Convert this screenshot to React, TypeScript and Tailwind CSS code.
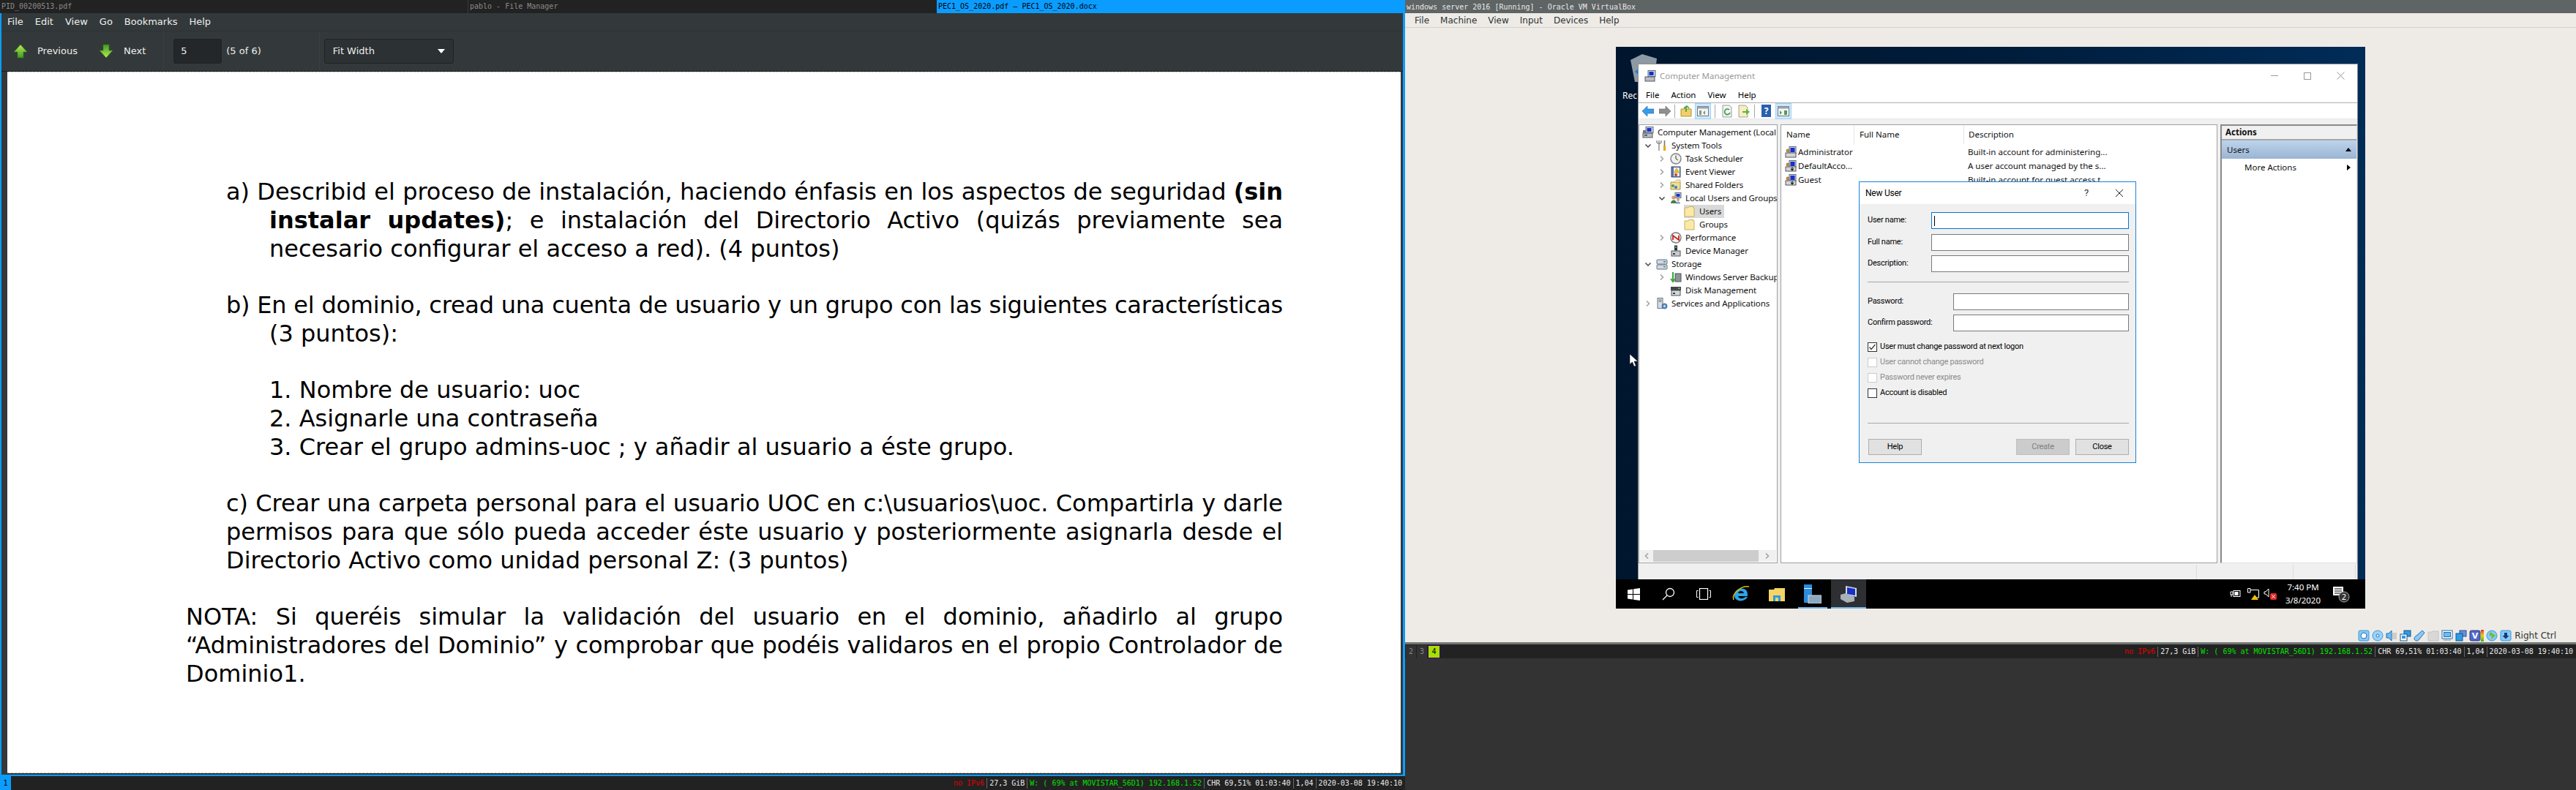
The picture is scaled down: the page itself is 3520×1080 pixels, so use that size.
import type { ReactNode } from "react";

const mono = "font-['DejaVu_Sans_Mono','Liberation_Mono',monospace]";
const segoe = "font-['Noto_Sans','Open_Sans',sans-serif]";

function GreenArrow({ down }: { down?: boolean }) {
    return (
        <svg width="20" height="20" viewBox="0 0 20 20" className={down ? "rotate-180" : ""}>
            <defs>
                <linearGradient id="ga" x1="0" y1="0" x2="0" y2="1">
                    <stop offset="0" stopColor="#b8ec5a" />
                    <stop offset="1" stopColor="#3f9a1c" />
                </linearGradient>
            </defs>
            <path d="M10 1 L19 11 H14 V19 H6 V11 H1 Z" fill="url(#ga)" stroke="#2f7a12" strokeWidth="0.6" />
        </svg>
    );
}

function StatusBar({ children, className }: { children?: ReactNode; className?: string }) {
    const parts = [
        { text: "27,3 GiB", color: "text-[#e8e8e8]" },
        { text: "W: ( 69% at MOVISTAR_56D1) 192.168.1.52", color: "text-[#00e000]" },
        { text: "CHR 69,51% 01:03:40", color: "text-[#e8e8e8]" },
        { text: "1,04", color: "text-[#e8e8e8]" },
        { text: "2020-03-08 19:40:10", color: "text-[#e8e8e8]" },
    ];
    return (
        <div className={`flex items-center bg-[#222222] text-[10px] ${mono} ${className ?? ""}`}>
            {children}
            <div className="ml-auto flex items-center pr-1">
                <span className="pr-[3px] text-[#e00000]">no IPv6</span>
                {parts.map((p) => (
                    <span key={p.text} className={`border-l border-[#666] px-[3px] leading-[14px] last:pr-0 ${p.color}`}>
                        {p.text}
                    </span>
                ))}
            </div>
        </div>
    );
}

function PdfViewer() {
    const line = "h-[38.75px] leading-[38.75px] whitespace-nowrap";
    const just = `${line} [text-align:justify] [text-align-last:justify]`;
    return (
        <div className="flex min-h-0 flex-1 flex-col border-r-[3px] border-b-2 border-l-2 border-[#0a9dff] bg-[#33393b] font-['DejaVu_Sans',sans-serif] text-[13px] text-[#eeeeec]">
            <div className="flex h-[25px] items-center gap-[16px] border-b border-[#2d3335] pl-2">
                {["File", "Edit", "View", "Go", "Bookmarks", "Help"].map((m) => (
                    <span key={m}>{m}</span>
                ))}
            </div>
            <div className="flex h-[54px] items-center pl-4">
                <GreenArrow />
                <span className="ml-[13px]">Previous</span>
                <span className="ml-[29px]">
                    <GreenArrow down />
                </span>
                <span className="ml-[14px]">Next</span>
                <span className="ml-[24px] h-full w-px bg-[#3a4042]" />
                <div className="ml-[13px] flex h-[34px] w-[66px] items-center rounded-[3px] border border-[#1f2324] bg-[#232729] pl-[9px]">5</div>
                <span className="ml-[6px]">(5 of 6)</span>
                <span className="ml-[79px] h-full w-px bg-[#3a4042]" />
                <div className="ml-[6px] flex h-[34px] w-[177px] items-center justify-between rounded-[3px] border border-[#1f2324] bg-[#2c3133] px-[11px]">
                    Fit Width
                    <span className="h-0 w-0 border-x-[5px] border-t-[6px] border-x-transparent border-t-white" />
                </div>
            </div>
            <div className="min-h-0 flex-1 border-t border-[#1b1e1f] pr-[3px] pb-[2px] pl-2">
                <div className="flex h-full flex-col border-y border-dashed border-[#cccccc] bg-white pt-[144px] pl-[244px] font-['DejaVu_Sans',sans-serif] text-[32px] text-black">
                    <div className="w-[1499px]">
                        <div className={`${just} pl-[55px] tracking-[-0.05px]`}>
                            a) Describid el proceso de instalación, haciendo énfasis en los aspectos de seguridad <b>(sin</b>
                        </div>
                        <div className={`${just} pl-[114px]`}>
                            <b>instalar updates)</b>; e instalación del Directorio Activo (quizás previamente sea
                        </div>
                        <div className={`${line} pl-[114px]`}>necesario configurar el acceso a red). (4 puntos)</div>
                        <div className="h-[38.75px]" />
                        <div className={`${just} pl-[55px] tracking-[-0.25px]`}>
                            b) En el dominio, cread una cuenta de usuario y un grupo con las siguientes características
                        </div>
                        <div className={`${line} pl-[114px]`}>(3 puntos):</div>
                        <div className="h-[38.75px]" />
                        <div className={`${line} pl-[114px]`}>1. Nombre de usuario: uoc</div>
                        <div className={`${line} pl-[114px]`}>2. Asignarle una contraseña</div>
                        <div className={`${line} pl-[114px]`}>3. Crear el grupo admins-uoc ; y añadir al usuario a éste grupo.</div>
                        <div className="h-[38.75px]" />
                        <div className={`${just} pl-[55px]`}>
                            c) Crear una carpeta personal para el usuario UOC en c:\usuarios\uoc. Compartirla y darle
                        </div>
                        <div className={`${just} pl-[55px]`}>
                            permisos para que sólo pueda acceder éste usuario y posteriormente asignarla desde el
                        </div>
                        <div className={`${line} pl-[55px]`}>Directorio Activo como unidad personal Z: (3 puntos)</div>
                        <div className="h-[38.75px]" />
                        <div className={just}>NOTA: Si queréis simular la validación del usuario en el dominio, añadirlo al grupo</div>
                        <div className={just}>“Administradores del Dominio” y comprobar que podéis validaros en el propio Controlador de</div>
                        <div className={line}>Dominio1.</div>
                    </div>
                </div>
            </div>
        </div>
    );
}

function TreeIcon({ kind }: { kind: string }) {
    const box = { width: 16, height: 16, viewBox: "0 0 16 16" };
    switch (kind) {
        case "computer":
            return (
                <svg {...box}>
                    <rect x="5" y="0.5" width="10" height="8" fill="#c9d6ea" stroke="#5a6a80" />
                    <rect x="6.5" y="2" width="6" height="5" fill="#1b2fc0" />
                    <rect x="1" y="9" width="13" height="6" fill="#b9bdc4" stroke="#55595f" />
                    <rect x="3" y="11" width="4" height="1.5" fill="#3b3f45" />
                    <path d="M1 5 h4 v4 h-4z" fill="#6b7787" />
                </svg>
            );
        case "tools":
            return (
                <svg {...box}>
                    <path d="M4 1 v14 M7 1 v3 l-3 2 -3 -2 v-3" stroke="#8a8a8a" fill="none" strokeWidth="1.4" />
                    <rect x="10" y="8" width="3" height="7" fill="#e8a800" />
                    <path d="M11.5 1 v7" stroke="#777" strokeWidth="1.6" />
                </svg>
            );
        case "clock":
            return (
                <svg {...box}>
                    <circle cx="8" cy="8" r="7" fill="#f1f1ea" stroke="#7b8088" strokeWidth="1.4" />
                    <path d="M8 3.5 V8 L11 10" stroke="#333" fill="none" />
                </svg>
            );
        case "event":
            return (
                <svg {...box}>
                    <rect x="2" y="1" width="12" height="14" fill="#5a78a8" stroke="#3c4f70" />
                    <rect x="5" y="2" width="8" height="12" fill="#e8edf3" />
                    <path d="M9 3 L12.5 9 H5.5 Z" fill="#f2c200" stroke="#9a7a00" strokeWidth="0.4" />
                    <circle cx="8" cy="12" r="2" fill="#d23a3a" />
                </svg>
            );
        case "shared":
            return (
                <svg {...box}>
                    <path d="M1 4 H14 V14 H1 Z" fill="#f2dc96" stroke="#a8924c" />
                    <path d="M6 4 L9 1 H14 V4" fill="#f7eab8" stroke="#a8924c" strokeWidth="0.6" />
                    <circle cx="4" cy="9" r="2" fill="#43a35a" />
                    <circle cx="8" cy="11" r="2" fill="#3a7bc8" />
                </svg>
            );
        case "users":
            return (
                <svg {...box}>
                    <rect x="7" y="0.5" width="8" height="7" fill="#c9d6ea" stroke="#5a6a80" />
                    <rect x="8.5" y="2" width="5" height="4" fill="#1b2fc0" />
                    <circle cx="5" cy="7" r="2.6" fill="#d3a06c" />
                    <path d="M1 15 c0 -6 8 -6 8 0 z" fill="#4d7a4a" />
                    <circle cx="11" cy="10" r="2" fill="#d3a06c" />
                    <path d="M8 15.5 c0 -4 6 -4 6 0 z" fill="#7d9fc8" />
                </svg>
            );
        case "folder":
            return (
                <svg {...box}>
                    <path d="M1 3 H6 L7 1.5 H13 V3 H14 V15 H1 Z" fill="#fbe9a8" stroke="#c8b060" />
                </svg>
            );
        case "perf":
            return (
                <svg {...box}>
                    <circle cx="8" cy="8" r="7" fill="#f4f4f4" stroke="#777" strokeWidth="1.4" />
                    <path d="M4 11 V5 L12 11 V5" stroke="#c92020" fill="none" strokeWidth="1.8" />
                </svg>
            );
        case "device":
            return (
                <svg {...box}>
                    <rect x="6" y="0.5" width="4" height="7" fill="#2c3036" />
                    <rect x="7" y="2" width="2" height="2" fill="#48c050" />
                    <rect x="2" y="8" width="12" height="7" fill="#c8cace" stroke="#4e5258" />
                    <rect x="4" y="11" width="3" height="2" fill="#3b3f45" />
                </svg>
            );
        case "storage":
            return (
                <svg {...box}>
                    <rect x="1" y="2" width="14" height="6" rx="1" fill="#cfd8e4" stroke="#67707c" />
                    <rect x="1" y="9" width="14" height="6" rx="1" fill="#cfd8e4" stroke="#67707c" />
                    <rect x="10" y="4" width="3" height="1.5" fill="#2f7fd1" />
                    <rect x="10" y="11" width="3" height="1.5" fill="#44a558" />
                </svg>
            );
        case "backup":
            return (
                <svg {...box}>
                    <rect x="7" y="3" width="8" height="11" fill="#8c929a" stroke="#50545a" />
                    <path d="M4 1 V14 M1 10 L4 14 L7 10" stroke="#38a838" fill="none" strokeWidth="2" />
                </svg>
            );
        case "disk":
            return (
                <svg {...box}>
                    <rect x="1" y="3" width="14" height="5" fill="#43474d" />
                    <rect x="11" y="4.5" width="2.5" height="1.5" fill="#60d060" />
                    <rect x="2" y="8" width="12" height="7" fill="#d4d6da" stroke="#4e5258" />
                    <rect x="4" y="11" width="3" height="2" fill="#3b3f45" />
                </svg>
            );
        default:
            return (
                <svg {...box}>
                    <rect x="2" y="0.5" width="7" height="14" fill="#d8dde4" stroke="#6b7480" />
                    <path d="M3.5 3 h4 M3.5 5 h4" stroke="#667" />
                    <circle cx="11.5" cy="11.5" r="3.5" fill="#5c93c9" stroke="#37648f" />
                    <circle cx="11.5" cy="11.5" r="1.2" fill="#e8eef5" />
                </svg>
            );
    }
}

function Chevron({ dir }: { dir?: "down" | "right" | "left" }) {
    if (!dir) return null;
    const d = dir === "down" ? "M1.5 3.5 L5 7 L8.5 3.5" : dir === "right" ? "M3 1.5 L6.5 5 L3 8.5" : "M7 1.5 L3.5 5 L7 8.5";
    return (
        <svg width="10" height="10" viewBox="0 0 10 10">
            <path d={d} fill="none" stroke={dir === "down" ? "#444" : "#a0a0a0"} strokeWidth="1.5" />
        </svg>
    );
}

const treeRows: { label: string; level: 0 | 1 | 2 | 3; icon: string; chevron?: "down" | "right"; selected?: boolean }[] = [
    { label: "Computer Management (Local", level: 0, icon: "computer" },
    { label: "System Tools", level: 1, icon: "tools", chevron: "down" },
    { label: "Task Scheduler", level: 2, icon: "clock", chevron: "right" },
    { label: "Event Viewer", level: 2, icon: "event", chevron: "right" },
    { label: "Shared Folders", level: 2, icon: "shared", chevron: "right" },
    { label: "Local Users and Groups", level: 2, icon: "users", chevron: "down" },
    { label: "Users", level: 3, icon: "folder", selected: true },
    { label: "Groups", level: 3, icon: "folder" },
    { label: "Performance", level: 2, icon: "perf", chevron: "right" },
    { label: "Device Manager", level: 2, icon: "device" },
    { label: "Storage", level: 1, icon: "storage", chevron: "down" },
    { label: "Windows Server Backup", level: 2, icon: "backup", chevron: "right" },
    { label: "Disk Management", level: 2, icon: "disk" },
    { label: "Services and Applications", level: 1, icon: "services", chevron: "right" },
];

const indent = ["", "", "pl-[19px]", "pl-[38px]"];

function TreePanel() {
    return (
        <div className="relative w-[190px] shrink-0 overflow-hidden border border-[#a0a0a0] bg-white">
            <div className="pt-[1px] pl-[4px] tracking-[-0.1px]">
                {treeRows.map((r) => (
                    <div key={r.label} className={`flex h-[18px] items-center whitespace-nowrap ${indent[r.level]}`}>
                        {r.level > 0 && (
                            <span className="flex w-[19px] shrink-0 items-center justify-center pr-[3px]">
                                <Chevron dir={r.chevron} />
                            </span>
                        )}
                        <span className={`flex h-[18px] items-center ${r.selected ? "bg-[#d9d9d9] pr-1" : ""}`}>
                            <TreeIcon kind={r.icon} />
                            <span className="ml-[5px]">{r.label}</span>
                        </span>
                    </div>
                ))}
            </div>
            <div className="absolute right-[1px] bottom-[1px] left-[1px] flex h-[16px] items-center bg-[#f0f0f0]">
                <span className="flex w-[18px] justify-center">
                    <Chevron dir="left" />
                </span>
                <span className="h-full w-[146px] bg-[#cdcdcd]" />
                <span className="flex w-[24px] justify-center">
                    <Chevron dir="right" />
                </span>
            </div>
        </div>
    );
}

function UserRow({ name, desc, plain }: { name: string; desc: string; plain?: boolean }) {
    return (
        <div className="flex h-[19px] items-center whitespace-nowrap">
            <span className="flex w-[102px] items-center pl-[5px]">
                <svg width="16" height="16" viewBox="0 0 16 16">
                    <rect x="6" y="0.5" width="9" height="9" fill="#c9d6ea" stroke="#5a6a80" />
                    <rect x="7.5" y="2" width="6" height="6" fill="#1b2fc0" />
                    <circle cx="4" cy="6" r="2.5" fill="#b9824f" />
                    <rect x="1" y="9" width="14" height="6" fill="#d2d5da" stroke="#555" />
                    {!plain && <path d="M10 9.5 v4 M8 11.5 L10 14 L12 11.5" stroke="#222" fill="none" strokeWidth="1.2" />}
                </svg>
                <span className="ml-[2px]">{name}</span>
            </span>
            <span className="ml-[153px]">{desc}</span>
        </div>
    );
}

function ContentPanel() {
    return (
        <div className="ml-[4px] w-[597px] shrink-0 overflow-hidden border border-[#a0a0a0] bg-white">
            <div className="flex h-[26px] items-center">
                <span className="h-full w-[100px] border-r border-[#e5e5e5] pt-[4px] pl-[7px]">Name</span>
                <span className="h-full w-[150px] border-r border-[#e5e5e5] pt-[4px] pl-[7px]">Full Name</span>
                <span className="h-full flex-1 pt-[4px] pl-[6px]">Description</span>
            </div>
            <div className="pt-[1px]">
                <UserRow name="Administrator" desc="Built-in account for administering..." plain />
                <UserRow name="DefaultAcco..." desc="A user account managed by the s..." />
                <UserRow name="Guest" desc="Built-in account for guest access t..." />
            </div>
        </div>
    );
}

function ActionsPanel() {
    return (
        <div className="ml-[4px] flex-1 overflow-hidden border-t-2 border-r border-b border-l-2 border-[#8a8a8a] border-r-[#e0e0e0] border-b-[#e0e0e0] bg-white">
            <div className="flex h-[20px] items-center border-b-2 border-[#a8a8a8] bg-[#f0f0f0] pl-[5px] font-bold">Actions</div>
            <div className="flex h-[25px] items-center justify-between bg-gradient-to-b from-[#bdd4ec] to-[#9ab4d3] pr-[7px] pl-[7px]">
                Users
                <span className="h-0 w-0 border-x-[4px] border-b-[5px] border-x-transparent border-b-black" />
            </div>
            <div className="flex h-[24px] items-center justify-between pr-[8px] pl-[31px]">
                More Actions
                <span className="h-0 w-0 border-y-[4px] border-l-[5px] border-y-transparent border-l-black" />
            </div>
        </div>
    );
}

function Field({ label, wide, focused }: { label: string; wide?: boolean; focused?: boolean }) {
    return (
        <div className="flex h-[23px] items-center">
            <span className={wide ? "w-[117px]" : "w-[87px]"}>{label}</span>
            <div className={`flex h-[23px] flex-1 items-center border bg-white pl-[3px] ${focused ? "border-[#0078d7]" : "border-[#7a7a7a]"}`}>
                {focused && <span className="h-[14px] w-px bg-black" />}
            </div>
        </div>
    );
}

function Check({ label, checked, disabled }: { label: string; checked?: boolean; disabled?: boolean }) {
    return (
        <div className={`flex h-[21px] items-center ${disabled ? "text-[#8a8a8a]" : ""}`}>
            <span className={`flex h-[13px] w-[13px] items-center justify-center border bg-white ${disabled ? "border-[#cccccc]" : "border-[#333]"}`}>
                {checked && (
                    <svg width="11" height="11" viewBox="0 0 11 11">
                        <path d="M1.5 5.5 L4 8.5 L9.5 2" fill="none" stroke="#333" strokeWidth="1.2" />
                    </svg>
                )}
            </span>
            <span className="ml-[4px]">{label}</span>
        </div>
    );
}

function DialogButton({ label, disabled }: { label: string; disabled?: boolean }) {
    return (
        <button className={`h-[22px] w-[73px] border ${disabled ? "border-[#bfbfbf] bg-[#cccccc] text-[#808080]" : "border-[#adadad] bg-[#e1e1e1] text-black"}`}>
            {label}
        </button>
    );
}

function NewUserDialog() {
    return (
        <div className="absolute top-[184px] left-[332px] flex h-[385px] w-[379px] flex-col border border-[#1883d7] bg-[#f0f0f0] font-['Roboto',sans-serif] text-[11px] tracking-[-0.25px] whitespace-nowrap text-black">
            <div className="flex h-[30px] shrink-0 items-center bg-white pr-[16px] pl-[8px] text-[12px]">
                New User
                <span className="ml-auto text-[13px] text-[#333]">?</span>
                <svg width="12" height="12" viewBox="0 0 12 12" className="ml-[36px]">
                    <path d="M1 1 L11 11 M11 1 L1 11" stroke="#222" />
                </svg>
            </div>
            <div className="flex flex-1 flex-col pt-[11px] pr-[9px] pl-[11px]">
                <div>
                    <Field label="User name:" focused />
                    <div className="mt-[7px]">
                        <Field label="Full name:" />
                    </div>
                    <div className="mt-[6px]">
                        <Field label="Description:" />
                    </div>
                </div>
                <div className="mt-[13px] h-px bg-[#a8a8a8]" />
                <div className="mt-[15px]">
                    <Field label="Password:" wide />
                </div>
                <div className="mt-[6px]">
                    <Field label="Confirm password:" wide />
                </div>
                <div className="mt-[11px]">
                    <Check label="User must change password at next logon" checked />
                    <Check label="User cannot change password" disabled />
                    <Check label="Password never expires" disabled />
                    <Check label="Account is disabled" />
                </div>
                <div className="mt-[30px] h-px bg-[#a8a8a8]" />
                <div className="mt-[21px] flex pl-[1px]">
                    <DialogButton label="Help" />
                    <span className="ml-auto" />
                    <DialogButton label="Create" disabled />
                    <span className="ml-[8px]">
                        <DialogButton label="Close" />
                    </span>
                </div>
            </div>
        </div>
    );
}

function ToolbarIcons() {
    return (
        <div className="flex h-[22px] items-center border-b border-[#e8e8e8] bg-white pl-[5px]">
            <svg width="16" height="14" viewBox="0 0 16 14">
                <path d="M0 7 L7 0 V4 H16 V10 H7 V14 Z" fill="#3a9be8" stroke="#1c67ad" strokeWidth="0.6" />
            </svg>
            <svg width="16" height="14" viewBox="0 0 16 14" className="ml-[7px]">
                <path d="M16 7 L9 0 V4 H0 V10 H9 V14 Z" fill="#8f8f8f" stroke="#666" strokeWidth="0.6" />
            </svg>
            <span className="mx-[5px] h-[18px] w-px bg-[#a8a8a8]" />
            <svg width="16" height="16" viewBox="0 0 16 16" className="ml-[2px]">
                <path d="M1 5 H15 V15 H1 Z" fill="#f2cf6a" stroke="#b69433" />
                <path d="M8 9 V2 M5 4 L9 1 L12 4" stroke="#36a336" fill="none" strokeWidth="1.6" />
            </svg>
            <span className="ml-[4px] flex h-[22px] w-[22px] items-center justify-center border border-[#9fd2f4] bg-[#cce8ff]">
                <svg width="16" height="14" viewBox="0 0 16 14">
                    <rect x="0.5" y="0.5" width="15" height="13" fill="#f4f4f4" stroke="#777" />
                    <rect x="0.5" y="0.5" width="15" height="3" fill="#9aa2ab" />
                    <path d="M3 6 h3 v6 h-3z M8 9 l3 -3 v6 z" fill="#7d9a8c" />
                </svg>
            </span>
            <span className="mx-[5px] h-[18px] w-px bg-[#a8a8a8]" />
            <svg width="16" height="18" viewBox="0 0 16 18" className="ml-[3px]">
                <path d="M2 1 H11 L14 4 V17 H2 Z" fill="#f4f4f4" stroke="#999" />
                <path d="M11 7 A3.8 3.8 0 1 0 12 11" fill="none" stroke="#2f9d46" strokeWidth="1.6" />
            </svg>
            <svg width="16" height="18" viewBox="0 0 16 18" className="ml-[7px]">
                <path d="M1 1 H10 L13 4 V17 H1 Z" fill="#f6eec8" stroke="#a8a080" />
                <path d="M6 9 H11 V6 L16 10 L11 14 V11 H6 Z" fill="#64b534" />
            </svg>
            <span className="mx-[6px] h-[18px] w-px bg-[#a8a8a8]" />
            <span className="ml-[3px] flex h-[17px] w-[13px] items-center justify-center bg-[#2a5fae] text-[12px] font-bold text-white">?</span>
            <span className="ml-[6px] flex h-[22px] w-[22px] items-center justify-center border border-[#9fd2f4] bg-[#cce8ff]">
                <svg width="16" height="14" viewBox="0 0 16 14">
                    <rect x="0.5" y="0.5" width="15" height="13" fill="#f4f4f4" stroke="#777" />
                    <rect x="0.5" y="0.5" width="15" height="3" fill="#9aa2ab" />
                    <path d="M3 6 l3 3 -3 3 z M9 6 h4 v6 h-4z" fill="#4d9c62" />
                </svg>
            </span>
        </div>
    );
}

function ComputerManagement() {
    return (
        <div className={`absolute top-[23px] left-[30px] flex h-[705px] w-[984px] flex-col border-x border-t border-[#8f8f8f] bg-[#f0f0f0] text-[11.5px] text-[#111] ${segoe}`}>
            <div className="flex h-[31px] shrink-0 items-center bg-white pl-[8px] text-[#999]">
                <svg width="16" height="16" viewBox="0 0 16 16">
                    <rect x="5" y="0.5" width="10" height="8" fill="#c9d6ea" stroke="#5a6a80" />
                    <rect x="6.5" y="2" width="6" height="5" fill="#1b2fc0" />
                    <rect x="1" y="9" width="13" height="6" fill="#b9bdc4" stroke="#55595f" />
                </svg>
                <span className="ml-[5px]">Computer Management</span>
                <span className="ml-auto h-px w-[10px] bg-[#999]" />
                <span className="ml-[35px] h-[10px] w-[10px] border border-[#999]" />
                <svg width="11" height="11" viewBox="0 0 11 11" className="mr-[17px] ml-[35px]">
                    <path d="M0.5 0.5 L10.5 10.5 M10.5 0.5 L0.5 10.5" stroke="#999" />
                </svg>
            </div>
            <div className="flex h-[22px] shrink-0 items-center gap-[16px] border-b border-[#b0b0b0] bg-white pl-[10px] text-black">
                {["File", "Action", "View", "Help"].map((m) => (
                    <span key={m}>{m}</span>
                ))}
            </div>
            <ToolbarIcons />
            <div className="flex min-h-0 flex-1 pt-[7px]">
                <TreePanel />
                <ContentPanel />
                <ActionsPanel />
            </div>
            <div className="flex h-[22px] shrink-0 justify-end pt-[2px]">
                <span className="h-full w-[132px] border-l border-[#dcdcdc]" />
                <span className="mr-[2px] h-full w-[86px] border-x border-[#dcdcdc]" />
            </div>
        </div>
    );
}

function Taskbar() {
    return (
        <div className={`absolute right-0 bottom-0 left-0 flex h-[40px] items-center bg-black text-[12px] text-white ${segoe}`}>
            <div className="flex w-[48px] justify-center">
                <svg width="17" height="17" viewBox="0 0 17 17">
                    <path d="M0 2.5 L7 1.5 V8 H0 Z M8 1.3 L17 0 V8 H8 Z M0 9 H7 V15.5 L0 14.5 Z M8 9 H17 V17 L8 15.7 Z" fill="#fff" />
                </svg>
            </div>
            <div className="flex w-[48px] justify-center">
                <svg width="18" height="18" viewBox="0 0 18 18">
                    <circle cx="11" cy="7" r="5.5" fill="none" stroke="#fff" strokeWidth="1.3" />
                    <path d="M7 11 L1 17" stroke="#fff" strokeWidth="1.3" />
                </svg>
            </div>
            <div className="flex w-[48px] justify-center">
                <svg width="20" height="16" viewBox="0 0 20 16" fill="none" stroke="#fff">
                    <rect x="4.5" y="0.5" width="11" height="15" strokeWidth="1.2" />
                    <path d="M2.5 3.5 H0.5 V12.5 H2.5 M17.5 3.5 H19.5 V12.5 H17.5" />
                </svg>
            </div>
            <div className="ml-[3px] flex w-[48px] justify-center">
                <svg width="24" height="24" viewBox="0 0 24 24">
                    <path d="M3 14 C3 6 11 3 16 5 C21 7 21 11 21 15 H8 C9 19 15 19 18 16 H21 C17 24 3 23 3 14 Z M8 11 H16 C15 7 9 7 8 11 Z" fill="#2ba4e8" />
                    <path d="M2 20 C-1 12 12 0 23 2" fill="none" stroke="#e8b500" strokeWidth="1.6" />
                </svg>
            </div>
            <div className="flex w-[50px] justify-center">
                <svg width="22" height="20" viewBox="0 0 22 20">
                    <path d="M0 4 H7 L8 2 H22 V20 H0 Z" fill="#f4d465" />
                    <rect x="6" y="12" width="10" height="8" fill="#2e9ae0" />
                    <rect x="9" y="15" width="4" height="5" fill="#f4d465" />
                </svg>
            </div>
            <div className="relative flex h-full w-[48px] items-center justify-center">
                <svg width="24" height="26" viewBox="0 0 24 26">
                    <rect x="0" y="0" width="11" height="25" fill="#2c8bdb" />
                    <rect x="0" y="5" width="11" height="1" fill="#dff" />
                    <rect x="6" y="15" width="18" height="11" fill="#8ba8bd" stroke="#d0dde6" />
                </svg>
                <span className="absolute right-[4px] bottom-0 left-[4px] h-[2px] bg-[#76b9ed]" />
            </div>
            <div className="relative ml-[1px] flex h-full w-[48px] items-center justify-center bg-[#2d2f33]">
                <svg width="24" height="24" viewBox="0 0 24 24">
                    <path d="M8 1 L23 4 V16 L8 13 Z" fill="#d6dce6" />
                    <path d="M10 3 L21 5 V14 L10 12 Z" fill="#1730c8" />
                    <path d="M1 13 L8 11 L20 16 V22 L10 24 L1 19 Z" fill="#a8b0b8" />
                </svg>
                <span className="absolute right-0 bottom-0 left-0 h-[2px] bg-[#76b9ed]" />
            </div>
            <div className="ml-auto flex h-full items-center">
                <svg width="16" height="12" viewBox="0 0 16 12" fill="none" stroke="#fff">
                    <rect x="5" y="1.5" width="9" height="8" />
                    <rect x="7" y="3.5" width="4" height="4" fill="#fff" />
                    <path d="M1 3 h3 v4 h-3z M2 7 v3" />
                </svg>
                <svg width="16" height="16" viewBox="0 0 16 16" fill="none" stroke="#fff" className="ml-[8px]">
                    <path d="M0.5 0.5 H4 V6 H0.5 Z M4 2.5 H15.5 V13 H9" />
                    <path d="M10 9 L15 16 H5 Z" fill="#f2c200" stroke="none" />
                </svg>
                <svg width="18" height="16" viewBox="0 0 18 16" className="ml-[6px]">
                    <path d="M1 5 H3 L7 1 V12 L3 8 H1 Z" fill="none" stroke="#fff" />
                    <rect x="9" y="7" width="9" height="9" rx="2" fill="#e02b2b" />
                    <path d="M11.5 9.5 L15.5 13.5 M15.5 9.5 L11.5 13.5" stroke="#fff" />
                </svg>
                <div className="ml-[11px] flex w-[50px] flex-col items-center text-[11.5px] leading-[18px]">
                    <span>7:40 PM</span>
                    <span>3/8/2020</span>
                </div>
                <svg width="26" height="26" viewBox="0 0 26 26" className="mr-[20px] ml-[14px]">
                    <path d="M2 3 H16 V15 H2 Z" fill="#fff" />
                    <path d="M4 6 H14 M4 9 H14 M4 12 H14" stroke="#000" />
                    <circle cx="17" cy="17" r="7" fill="#333" stroke="#aaa" />
                    <text x="17" y="21" fontSize="11" textAnchor="middle" fill="#fff" fontFamily="Noto Sans">2</text>
                </svg>
            </div>
        </div>
    );
}

function VmScreen() {
    return (
        <div className="relative h-[768px] w-[1024px] shrink-0 overflow-hidden bg-gradient-to-r from-[#00162e] via-[#001c3a] to-[#002c58]">
            <svg width="40" height="40" viewBox="0 0 40 40" className="absolute top-[10px] left-[18px]">
                <path d="M2 8 L18 0 L38 6 L34 38 H8 Z" fill="#8d99a5" />
                <path d="M8 24 L15 18 L15 30 Z" fill="#1d7ed0" />
            </svg>
            <span className={`absolute top-[58px] left-[9px] text-[12px] text-white ${segoe}`}>Rec</span>
            <svg width="14" height="19" viewBox="0 0 14 19" className="absolute top-[419px] left-[18px]">
                <path d="M1 1 V15 L4.5 12 L7 18 L9.5 17 L7 11 H12 Z" fill="#fff" stroke="#000" strokeWidth="0.5" />
            </svg>
            <ComputerManagement />
            <NewUserDialog />
            <Taskbar />
        </div>
    );
}

function VbIcon({ kind }: { kind: string }) {
    const c = "#2f9be8";
    return (
        <svg width="16" height="16" viewBox="0 0 16 16">
            {kind === "disk" && (
                <>
                    <rect x="1" y="1" width="14" height="14" rx="2" fill="#8cc8f4" stroke={c} />
                    <circle cx="8" cy="8" r="4" fill="#fff" stroke="#1d6fb0" />
                </>
            )}
            {kind === "cd" && (
                <>
                    <circle cx="8" cy="8" r="7" fill="#9cd3f8" stroke={c} />
                    <circle cx="8" cy="8" r="2" fill="#fff" stroke="#1d6fb0" />
                </>
            )}
            {kind === "audio" && (
                <>
                    <rect x="9" y="4" width="6" height="9" fill="#ccc" />
                    <path d="M1 5 H4 L8 1 V15 L4 11 H1 Z" fill="#6cbcf4" stroke="#1d6fb0" />
                </>
            )}
            {kind === "net" && (
                <>
                    <rect x="6" y="1" width="9" height="8" fill={c} stroke="#14568d" />
                    <rect x="1" y="6" width="9" height="9" fill="#fff" stroke="#14568d" />
                    <rect x="3" y="8" width="5" height="4" fill={c} />
                </>
            )}
            {kind === "usb" && <path d="M12 1 L15 4 L7 14 C5 16 1 15 1 12 C1 10 2 9 4 8 Z" fill="#8cc8f4" stroke="#1d6fb0" />}
            {kind === "folder" && <path d="M1 3 H6 L7 2 H15 V15 H1 Z" fill="#d8d8d8" stroke="#c4c4c4" />}
            {kind === "screen" && (
                <>
                    <rect x="1" y="1" width="14" height="11" fill="#fff" stroke="#1d6fb0" />
                    <rect x="3.5" y="3.5" width="9" height="6" fill="#6cbcf4" stroke="#1d6fb0" />
                    <rect x="3" y="13" width="10" height="2" fill="#bbb" />
                </>
            )}
            {kind === "snap" && (
                <>
                    <rect x="6" y="1" width="9" height="8" fill="#6c8fd8" stroke="#2c4d9c" />
                    <rect x="1" y="5" width="9" height="10" fill={c} stroke="#14568d" />
                </>
            )}
            {kind === "v" && (
                <>
                    <rect x="1" y="1" width="14" height="14" rx="2" fill="#5268c8" stroke="#2c3a88" />
                    <text x="8" y="12" fontSize="11" fontWeight="700" textAnchor="middle" fill="#fff" fontFamily="DejaVu Sans">V</text>
                </>
            )}
            {kind === "globe" && (
                <>
                    <circle cx="8" cy="8" r="7" fill="#8cc8f4" stroke={c} />
                    <path d="M6 3 L13 8 L7 13 L8 9 L4 7 Z" fill="#6cc034" />
                </>
            )}
            {kind === "down" && (
                <>
                    <rect x="1" y="1" width="14" height="14" rx="2" fill="#8cc8f4" stroke={c} />
                    <path d="M6 4 H10 V8 H12.5 L8 12.5 L3.5 8 H6 Z" fill="#0f3d78" />
                </>
            )}
        </svg>
    );
}

function RightWindow() {
    return (
        <div className="flex min-w-0 flex-1 flex-col">
            <div className={`flex h-[18px] items-center bg-[#5f6464] pl-[2px] text-[10px] text-[#e8e8e8] ${mono}`}>
                windows server 2016 [Running] - Oracle VM VirtualBox
            </div>
            <div className="flex h-[863px] flex-col border-b-[3px] border-[#6f7474] bg-[#eeebe6] font-['DejaVu_Sans',sans-serif] text-[12px] text-[#2e3436]">
                <div className="flex h-[20px] shrink-0 items-center gap-[15px] border-b border-[#d5d2cc] pl-[13px]">
                    {["File", "Machine", "View", "Input", "Devices", "Help"].map((m) => (
                        <span key={m}>{m}</span>
                    ))}
                </div>
                <div className="pt-[26px] pl-[288px]">
                    <VmScreen />
                </div>
                <div className="mt-[28px] flex items-center justify-end pr-[27px]">
                    <div className="flex items-center gap-[3px]">
                        {["disk", "cd", "audio", "net", "usb", "folder", "screen", "snap"].map((k) => (
                            <VbIcon key={k} kind={k} />
                        ))}
                        <VbIcon kind="v" />
                        <span className="-ml-[3px] h-[16px] w-[4px] bg-gradient-to-b from-[#e02020] via-[#e8d000] to-[#20b020]" />
                        <VbIcon kind="globe" />
                        <VbIcon kind="down" />
                    </div>
                    <span className="ml-[4px]">Right Ctrl</span>
                </div>
            </div>
            <StatusBar className="h-[19px]">
                <span className="ml-[1px] flex h-[18px] w-[14px] items-center justify-center bg-[#333] text-[#888]">2</span>
                <span className="ml-[1px] flex h-[18px] w-[14px] items-center justify-center bg-[#333] text-[#888]">3</span>
                <span className="ml-[1px] flex h-[18px] w-[17px] items-center justify-center border border-[#4b0082] bg-[#a5e000] text-black">4</span>
            </StatusBar>
        </div>
    );
}

export default function App() {
    return (
        <div className="flex h-[1080px] w-[3520px] overflow-hidden bg-[#333333]">
            <div className="flex w-[1920px] shrink-0 flex-col">
                <div className={`flex h-[18px] shrink-0 text-[10px] leading-[17px] text-[#8a8a8a] ${mono}`}>
                    <div className="w-[640px] border-r border-[#3a3a3a] bg-[#222222] pl-[2px]">PID_00200513.pdf</div>
                    <div className="w-[640px] bg-[#222222] pl-[2px]">pablo - File Manager</div>
                    <div className="w-[640px] bg-[#0a9dff] pl-[2px] text-black">PEC1_OS_2020.pdf — PEC1_OS_2020.docx</div>
                </div>
                <PdfViewer />
                <StatusBar className="h-[19px] shrink-0">
                    <span className="flex h-[19px] w-[15px] items-center justify-center bg-[#0a9dff] text-black">1</span>
                </StatusBar>
            </div>
            <RightWindow />
        </div>
    );
}
